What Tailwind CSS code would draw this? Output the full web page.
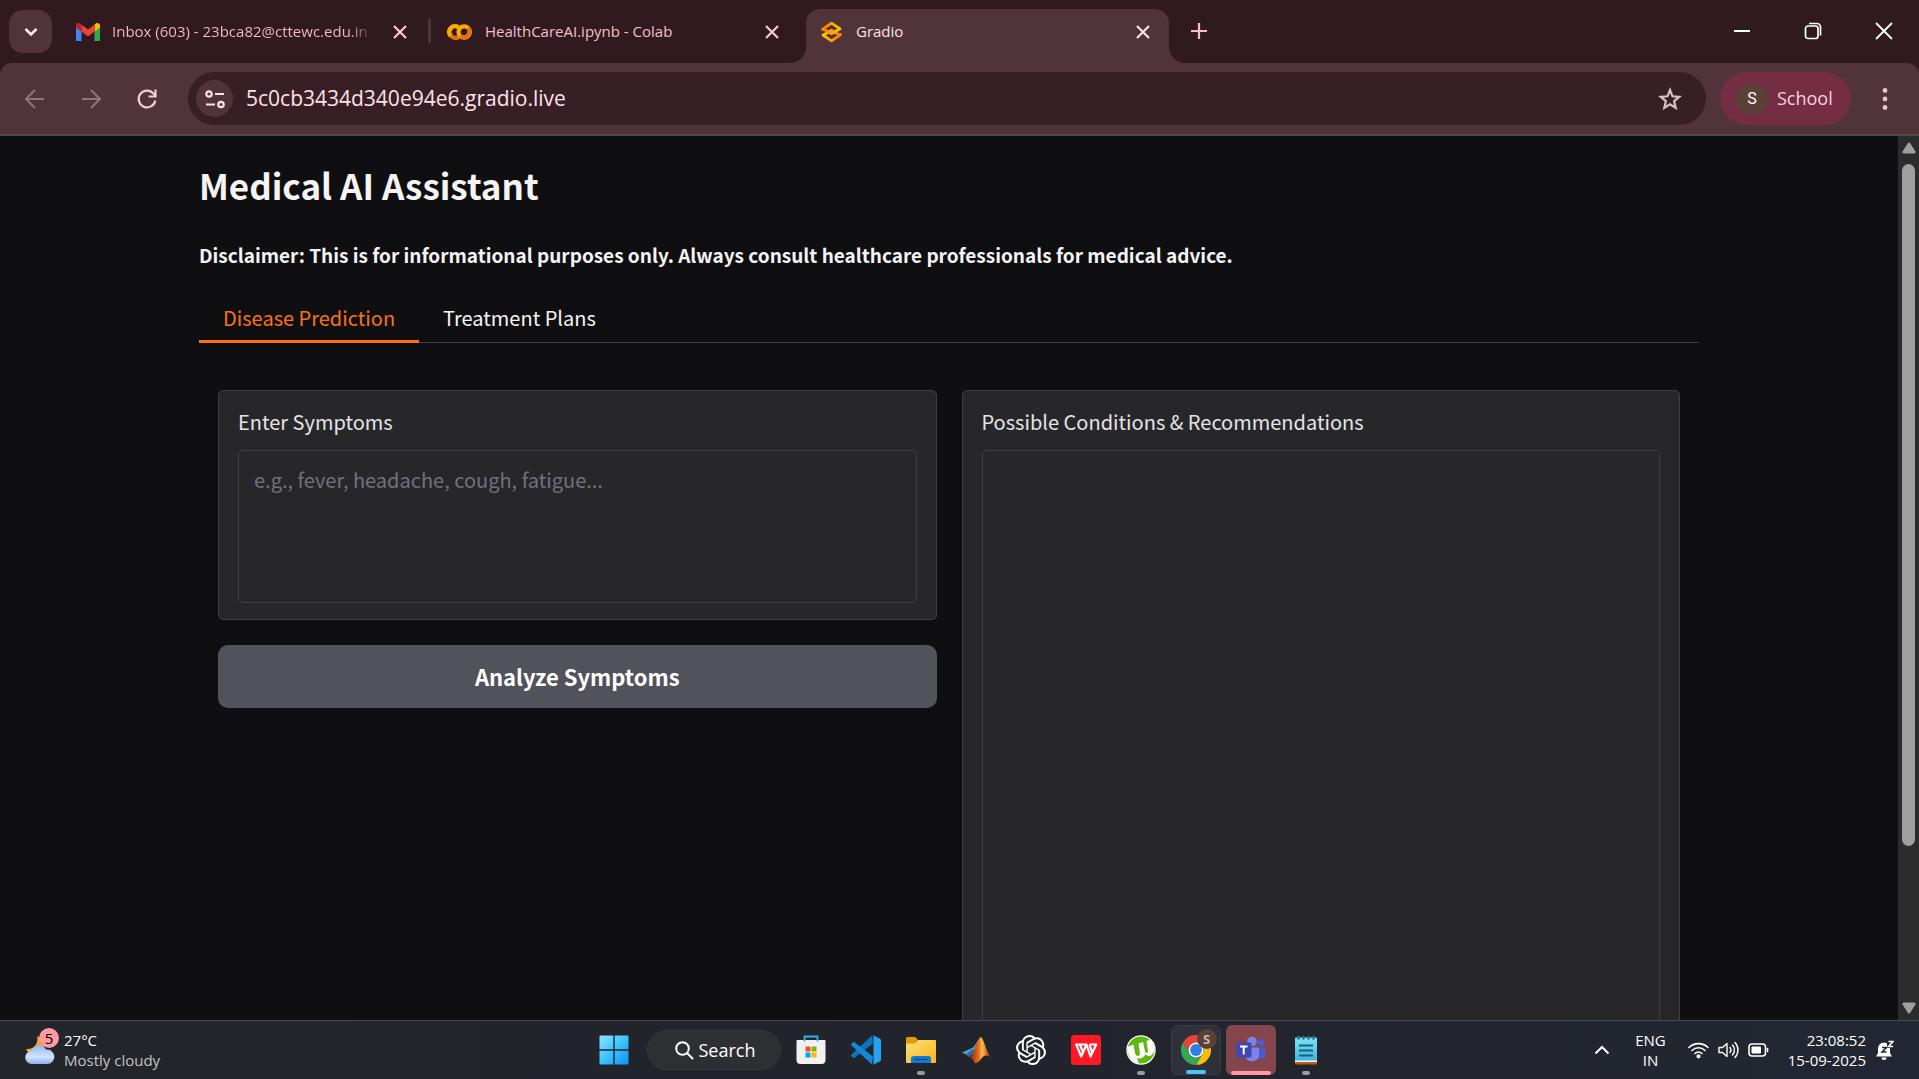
<!DOCTYPE html>
<html lang="en">
<head>
<meta charset="utf-8">
<title>Gradio</title>
<script src="https://cdn.jsdelivr.net/npm/@tailwindcss/browser@4"></script>
</head>
<body class="flex h-screen flex-col overflow-hidden bg-[#0f0f11] font-['Open_Sans','Noto_Sans',sans-serif] text-white">

<!-- Tab strip -->
<header class="shrink-0 bg-[#301a1f]">
  <div class="flex h-[63px] items-end">
    <button aria-label="Search tabs" class="mb-[10px] ml-[9px] flex h-[43px] w-[43px] items-center justify-center rounded-[14px] bg-[#50343a]">
      <svg class="size-4" viewBox="0 0 16 16" fill="none" stroke="#ffe8ec" stroke-width="2.6"><path d="M2.500 5 8 10.500 13.500 5"/></svg>
    </button>
    <div class="flex h-[63px] w-[376px] items-center pl-6">
      <svg class="h-[18px] w-6 shrink-0" viewBox="0 0 24 18"><path fill="#4285f4" d="M0 4v12.400C0 17.300.7 18 1.600 18H5.500V8z"/><path fill="#34a853" d="M18.500 18h3.900c.9 0 1.600-.7 1.600-1.600V4l-5.500 4z"/><path fill="#fbbc04" d="M18.500 1.600V8.500L24 4.400V2.500c0-2-2.300-3.200-4-2z"/><path fill="#ea4335" d="M5.500 8.500V1.600L12 6.500l6.500-4.900v6.900L12 13.400z"/><path fill="#c5221f" d="M0 2.500v1.900l5.500 4.100V1.600L4 .5C2.300-.7 0 .5 0 2.500z"/></svg>
      <span class="ml-3 w-[262px] overflow-hidden bg-linear-to-r from-[#f0c0ca] from-90% to-transparent bg-clip-text text-[15px] whitespace-nowrap text-transparent">Inbox (603) - 23bca82@cttewc.edu.in</span>
      <button aria-label="Close tab" class="ml-4 size-5 shrink-0"><svg class="size-5" viewBox="0 0 20 20" stroke="#f6ccd4" stroke-width="2.200"><path d="M4 4 16 16M16 4 4 16"/></svg></button>
    </div>
    <div class="mb-5 h-[25px] w-[3px] rounded-full bg-[#50343a]"></div>
    <div class="flex h-[63px] w-[375px] items-center pl-4">
      <svg class="h-4 w-[25px] shrink-0" viewBox="0 0 25 16" fill="none" stroke-width="4.200"><path stroke="#e8710a" d="M12.300 3.600A5.800 5.800 0 1 0 12 12.700"/><path stroke="#f9ab00" d="M3.600 12A5.800 5.800 0 0 1 11.800 3.800"/><circle stroke="#f9ab00" cx="17.200" cy="8" r="5.700"/><path stroke="#e8710a" d="M21.200 4A5.700 5.700 0 0 1 13.200 12"/></svg>
      <span class="ml-[13px] w-[262px] text-[15px] whitespace-nowrap text-[#f0c0ca]">HealthCareAI.ipynb - Colab</span>
      <button aria-label="Close tab" class="ml-[15px] size-5 shrink-0"><svg class="size-5" viewBox="0 0 20 20" stroke="#f6ccd4" stroke-width="2.200"><path d="M4 4 16 16M16 4 4 16"/></svg></button>
    </div>
    <div class="relative flex h-[54px] w-[363px] items-center rounded-t-[14px] bg-[#50343a] pb-[9px] pl-[15px]">
      <svg class="absolute bottom-0 -left-4 size-4" viewBox="0 0 16 16" fill="#50343a"><path d="M16 0v16H0A16 16 0 0 0 16 0z"/></svg>
      <svg class="absolute -right-4 bottom-0 size-4" viewBox="0 0 16 16" fill="#50343a"><path d="M0 0v16h16A16 16 0 0 1 0 0z"/></svg>
      <svg class="h-[22px] w-[21px] shrink-0" viewBox="0 0 21 22" fill="none" stroke-width="2.800" stroke-linejoin="round"><defs><linearGradient id="ga" x1="0" y1="0" x2="1" y2="0"><stop offset="0" stop-color="#ff7c00"/><stop offset="1" stop-color="#ffc800"/></linearGradient><linearGradient id="gb" x1="0" y1="0" x2="1" y2="0"><stop offset="0" stop-color="#ffc800"/><stop offset="1" stop-color="#ff7c00"/></linearGradient></defs><path stroke="url(#gb)" d="M10.500 9.200 19 14.200 10.500 19.800 2 14.200z"/><path stroke="url(#ga)" d="M10.500 2.200 19 7.800 10.500 12.800 2 7.800z"/><path stroke="#ff9a00" stroke-width="2" d="M1.500 7.800v2M19.500 12.200v2"/></svg>
      <span class="ml-[14px] w-[270px] text-[15px] text-[#ffe2e8]">Gradio</span>
      <button aria-label="Close tab" class="ml-[7px] size-5 shrink-0"><svg class="size-5" viewBox="0 0 20 20" stroke="#ffe2e8" stroke-width="2.200"><path d="M4 4 16 16M16 4 4 16"/></svg></button>
    </div>
    <button aria-label="New tab" class="mb-[22px] ml-5 size-5"><svg class="size-5" viewBox="0 0 20 20" stroke="#f0c0ca" stroke-width="2.200"><path d="M10 2v16M2 10h16"/></svg></button>
    <div class="mb-[23px] ml-auto flex gap-[53px] pr-[26px]">
      <button aria-label="Minimize" class="size-[18px]"><svg class="size-[18px]" viewBox="0 0 18 18" stroke="#fff" stroke-width="2"><path d="M1 9h16"/></svg></button>
      <button aria-label="Restore" class="size-[18px]"><svg class="size-[18px]" viewBox="0 0 18 18" fill="none" stroke="#fff" stroke-width="1.700"><rect x="1.500" y="4" width="12.500" height="12.500" rx="2.500"/><path d="M5 1.500h8a3.500 3.500 0 0 1 3.500 3.500v8.500"/></svg></button>
      <button aria-label="Close" class="size-[18px]"><svg class="size-[18px]" viewBox="0 0 18 18" stroke="#fff" stroke-width="1.800"><path d="M1 1 17 17M17 1 1 17"/></svg></button>
    </div>
  </div>

  <!-- Toolbar -->
  <div class="flex h-[73px] items-center rounded-t-xl border-b-2 border-[#534549] bg-[#50343a] pl-6">
    <button aria-label="Back" class="size-[22px]"><svg class="size-[22px]" viewBox="0 0 22 22" fill="none" stroke="#8f747b" stroke-width="2"><path d="M20 11H2.500M11 2 2 11l9 9"/></svg></button>
    <button aria-label="Forward" class="ml-[34px] size-[22px]"><svg class="size-[22px]" viewBox="0 0 22 22" fill="none" stroke="#8f747b" stroke-width="2"><path d="M2 11h17.500M11 2l9 9-9 9"/></svg></button>
    <button aria-label="Reload" class="ml-[34px] size-[22px]"><svg class="size-[22px]" viewBox="0 0 22 22" fill="none" stroke="#f6ccd4" stroke-width="2.200"><path d="M19.300 12.500A8.400 8.400 0 1 1 17.500 5.600L19.500 8M19.500 1.500V8.500H12.500"/></svg></button>
    <div class="ml-[30px] flex h-[53px] flex-1 items-center rounded-full bg-[#381f25] pr-6 pl-2">
      <button aria-label="View site information" class="flex size-[37px] items-center justify-center rounded-full bg-[#50343a]">
        <svg class="size-5" viewBox="0 0 20 20" fill="none" stroke="#ffe2e8" stroke-width="2.200"><circle cx="4" cy="5" r="2.700"/><path d="M10 5h9M1 15.500h9"/><circle cx="16" cy="15.500" r="2.700"/></svg>
      </button>
      <input aria-label="Address" value="5c0cb3434d340e94e6.gradio.live" class="ml-[13px] min-w-0 flex-1 bg-transparent text-[21px] text-[#ffe2e8] outline-none">
      <button aria-label="Bookmark this tab" class="size-6"><svg class="size-6" viewBox="0 0 24 24" fill="none" stroke="#d9c0c6" stroke-width="2.200" stroke-linejoin="miter"><path d="M12 3l2.500 6.300 6.700.5-5.100 4.400 1.600 6.600L12 17.200l-5.700 3.600 1.600-6.600-5.100-4.400 6.700-.5z"/></svg></button>
    </div>
    <button class="ml-[14px] flex h-[53px] w-[131px] items-center rounded-full bg-[#742d43] pl-4 text-[18px] text-[#ffd0dc]">
      <span class="mr-[9px] flex size-8 items-center justify-center rounded-full bg-[#5b4037] font-[Roboto,sans-serif] text-[16px] text-white">S</span>School
    </button>
    <button aria-label="Menu" class="mr-6 ml-[24px] h-6 w-5"><svg class="h-6 w-5" viewBox="0 0 20 24" fill="#f0c0ca"><circle cx="10" cy="3.500" r="2.400"/><circle cx="10" cy="12" r="2.400"/><circle cx="10" cy="20.500" r="2.400"/></svg></button>
  </div>
</header>

<!-- Page -->
<div class="flex min-h-0 flex-1 font-['Noto_Sans_CJK_SC',sans-serif]">
  <main class="min-w-0 flex-1 overflow-hidden">
    <div class="mx-auto max-w-[1500px] pt-[22px]">
      <h1 class="text-[35px] leading-[54px] font-bold text-[#f4f4f5]">Medical AI Assistant</h1>
      <p class="mt-7 text-[19px] leading-[30px] font-bold text-[#f4f4f5]">Disclaimer: This is for informational purposes only. Always consult healthcare professionals for medical advice.</p>
      <div role="tablist" class="mt-[22px] flex h-[51px] border-b border-[#3f3f46] text-[20px]">
        <button role="tab" aria-selected="true" class="-mb-px border-b-[3px] border-[#f97316] px-6 pt-1 text-[#f97316]">Disease Prediction</button>
        <button role="tab" aria-selected="false" class="px-6 pt-1 pb-[2px] text-[#f4f4f5]">Treatment Plans</button>
      </div>
      <div class="mt-[47px] grid grid-cols-2 gap-[25px] px-[19px]">
        <div>
          <div class="rounded-[5px] border border-[#3f3f46] bg-[#27272a] px-[19px] pt-[16px] pb-4">
            <label for="symptoms" class="block text-[20px] leading-[30px] text-[#e4e4e7]">Enter Symptoms</label>
            <textarea id="symptoms" placeholder="e.g., fever, headache, cough, fatigue..." class="mt-[13px] block h-[153px] w-full resize-none rounded-[5px] border border-[#3f3f46] bg-[#27272a] px-[15px] py-[14px] text-[20px] leading-[30px] text-[#f4f4f5] placeholder:text-[#71717a]"></textarea>
          </div>
          <button class="mt-[25px] h-[63px] w-full rounded-[10px] bg-[#52525b] text-[22px] font-bold text-white">Analyze Symptoms</button>
        </div>
        <div class="rounded-[5px] border border-[#3f3f46] bg-[#27272a] px-[19px] pt-[16px] pb-4">
          <label for="result" class="block text-[20px] leading-[30px] text-[#e4e4e7]">Possible Conditions &amp; Recommendations</label>
          <textarea id="result" readonly class="mt-[13px] block h-[640px] w-full resize-none rounded-[5px] border border-[#3f3f46] bg-[#27272a] px-[15px] py-[14px] text-[20px]"></textarea>
        </div>
      </div>
    </div>
  </main>
  <div class="flex w-[21px] shrink-0 flex-col items-center bg-[#2c2c2c] py-[6px]">
    <svg class="h-3 w-[14px]" viewBox="0 0 14 12" fill="#9f9f9f"><path d="M6 1 .5 9.500Q0 11.500 2 11.500H12Q14 11.500 13.500 9.500L8 1Q7 0 6 1z"/></svg>
    <div class="mt-[10px] h-[682px] w-[13px] rounded-full bg-[#9f9f9f]"></div>
    <svg class="mt-auto h-3 w-[14px]" viewBox="0 0 14 12" fill="#9f9f9f"><path d="M6 11 .5 2.500Q0 .5 2 .5H12Q14 .5 13.500 2.500L8 11Q7 12 6 11z"/></svg>
  </div>
</div>

<!-- Taskbar -->
<footer class="grid h-[59px] shrink-0 grid-cols-[1fr_auto_1fr] items-center border-t border-[#4a4a4e] bg-linear-to-r from-[#222529] via-[#21242b] via-50% to-[#232733]">
  <button class="relative flex items-center pl-[25px] text-left">
    <svg class="h-[30px] w-[30px]" viewBox="0 0 30 30"><defs><linearGradient id="cl" x1="0" y1="0" x2="0" y2="1"><stop offset="0" stop-color="#8fb8f5"/><stop offset=".6" stop-color="#d4e2fb"/><stop offset="1" stop-color="#8db0f0"/></linearGradient></defs><path fill="#f6a623" d="M12 1C14 8 9 15 1 14c2 5 9 7 14 3s6-12-3-16z"/><path fill="url(#cl)" d="M7 29a6.500 6.500 0 0 1-.5-13A8 8 0 0 1 21 14.500 7.200 7.200 0 0 1 23 29z"/></svg>
    <span class="absolute -top-[2px] left-[39px] flex size-5 items-center justify-center rounded-full bg-[#ff99a4] text-[15px] leading-none text-black">5</span>
    <span class="ml-[9px] text-[15px] leading-5"><span class="block">27°C</span><span class="block text-[#c4c4c6]">Mostly cloudy</span></span>
  </button>

  <nav aria-label="Taskbar" class="flex items-center gap-[5px]">
    <button aria-label="Start" class="mr-[3px] flex size-[50px] items-center justify-center"><svg class="size-[30px]" viewBox="0 0 30 30"><defs><linearGradient id="wn" x1="0" y1="0" x2="1" y2="1"><stop offset="0" stop-color="#8be4ff"/><stop offset=".5" stop-color="#3cc4fd"/><stop offset="1" stop-color="#0a93f5"/></linearGradient></defs><path fill="url(#wn)" d="M1.500.5H14.300V14.300H.5V1.500a1 1 0 0 1 1-1zM15.700.5h12.800a1 1 0 0 1 1 1v12.800H15.700zM.5 15.700h13.800v13.800H1.500a1 1 0 0 1-1-1zM15.700 15.700h13.800v12.800a1 1 0 0 1-1 1H15.700z"/></svg></button>
    <button class="flex h-10 w-[134px] items-center rounded-full border border-[#34363b] bg-[#2d2f33] pl-[27px] text-[18px] text-white"><svg class="mr-[5px] size-[19px]" viewBox="0 0 19 19" fill="none" stroke="#fff" stroke-width="2"><circle cx="7.500" cy="7.500" r="6.300"/><path d="m12 12 6 6"/></svg>Search</button>
    <button aria-label="Microsoft Store" class="flex size-[50px] items-center justify-center"><svg class="size-[30px]" viewBox="0 0 30 30"><path fill="#f1f1f1" d="M1.500 5h27a1 1 0 0 1 1 1v19a4 4 0 0 1-4 4h-21a4 4 0 0 1-4-4V6a1 1 0 0 1 1-1z"/><path d="M8.500 6.500V1.500h13v5" fill="none" stroke="#27b5ec" stroke-width="1.800"/><path fill="#f25022" d="M9.500 11.500h5v5h-5z"/><path fill="#7fba00" d="M15.500 11.500h5v5h-5z"/><path fill="#00a4ef" d="M9.500 17.500h5v5h-5z"/><path fill="#ffb900" d="M15.500 17.500h5v5h-5z"/></svg></button>
    <button aria-label="Visual Studio Code" class="flex size-[50px] items-center justify-center"><svg class="size-[30px]" viewBox="0 0 30 30"><path fill="#0a74bf" d="M22 8.500 3.500 22.800a1.300 1.300 0 0 1-1.600-.1L.5 21.300a1.200 1.200 0 0 1 0-1.900L21 .4z"/><path fill="#1288d6" d="M22 21.500 3.500 7.200a1.300 1.300 0 0 0-1.600.1L.5 8.700a1.200 1.200 0 0 0 0 1.900L21 29.600z"/><path fill="#25a2f0" d="M21 29.700a2 2 0 0 0 1.600-.1l6.200-3A2 2 0 0 0 30 24.900V5.100a2 2 0 0 0-1.200-1.700l-6.200-3A2 2 0 0 0 20.500.7c.7-.6 2-.1 2 .8v27c0 1-1.300 1.500-1.500 1.200z"/></svg></button>
    <button aria-label="File Explorer" class="relative flex size-[50px] items-center justify-center"><svg class="size-[30px]" viewBox="0 0 30 30"><defs><linearGradient id="fe" x1="0" y1="0" x2="1" y2="1"><stop offset="0" stop-color="#ffe07a"/><stop offset="1" stop-color="#f9b51a"/></linearGradient></defs><path fill="#e09a06" d="M0 3.500A1.500 1.500 0 0 1 1.500 2h8L12 5h16v6H0z"/><path fill="url(#fe)" d="M0 8.500h9L12.500 5H29a1 1 0 0 1 1 1v21a1 1 0 0 1-1 1H1a1 1 0 0 1-1-1z"/><path fill="#1679d0" d="M5 28v-4.500A2.500 2.500 0 0 1 7.500 21h15a2.500 2.500 0 0 1 2.500 2.500V28z"/><path stroke="#0b4e94" stroke-width="1.200" d="M8.500 24.500h13"/></svg><span class="absolute bottom-0 h-1 w-2 rounded-full bg-[#9a9b9e]"></span></button>
    <button aria-label="MATLAB" class="flex size-[50px] items-center justify-center"><svg class="size-[30px]" viewBox="0 0 30 30"><defs><linearGradient id="ml" x1="0" y1="0" x2="1" y2="0"><stop offset="0" stop-color="#7c1f18"/><stop offset=".45" stop-color="#e8731a"/><stop offset=".6" stop-color="#f9c04a"/><stop offset="1" stop-color="#b3260f"/></linearGradient></defs><path fill="#4f9fd0" d="M1 17.500 10 13.500c3-1 5-5 8-10L13 17 8 21z"/><path fill="#2b6a9e" d="M5 19.500 12 14l2 3-6 5z"/><path fill="url(#ml)" d="M20 2c3 2 5 14 9.500 20.500C26 19.500 23 20 20 24c-2 2.500-4 4-6 4.500-1-3-3-5-5.500-6.500C13 20.500 16 3 20 2z"/></svg></button>
    <button aria-label="ChatGPT" class="flex size-[50px] items-center justify-center"><svg class="size-[30px]" viewBox="0 0 24 24" fill="#fff"><path d="M22.282 9.821a5.985 5.985 0 0 0-.516-4.910 6.046 6.046 0 0 0-6.510-2.900A6.065 6.065 0 0 0 4.981 4.182a5.985 5.985 0 0 0-3.998 2.900 6.046 6.046 0 0 0 .743 7.097 5.980 5.980 0 0 0 .510 4.911 6.051 6.051 0 0 0 6.515 2.900A5.985 5.985 0 0 0 13.260 24a6.056 6.056 0 0 0 5.772-4.206 5.990 5.990 0 0 0 3.997-2.900 6.056 6.056 0 0 0-.747-7.073zM13.260 22.430a4.476 4.476 0 0 1-2.876-1.040l.141-.081 4.779-2.758a.795.795 0 0 0 .392-.681v-6.737l2.020 1.168a.071.071 0 0 1 .038.052v5.583a4.504 4.504 0 0 1-4.494 4.494zM3.600 18.304a4.470 4.470 0 0 1-.535-3.014l.142.085 4.783 2.759a.771.771 0 0 0 .780 0l5.843-3.369v2.332a.080.080 0 0 1-.033.062L9.740 19.950a4.500 4.500 0 0 1-6.140-1.646zM2.340 7.896a4.485 4.485 0 0 1 2.366-1.973V11.600a.766.766 0 0 0 .388.676l5.815 3.355-2.020 1.168a.076.076 0 0 1-.071 0l-4.830-2.786A4.504 4.504 0 0 1 2.340 7.872zm16.597 3.855-5.833-3.387L15.119 7.200a.076.076 0 0 1 .071 0l4.830 2.791a4.494 4.494 0 0 1-.676 8.105v-5.678a.790.790 0 0 0-.407-.667zm2.010-3.023-.141-.085-4.774-2.782a.776.776 0 0 0-.785 0L9.409 9.230V6.897a.066.066 0 0 1 .028-.061l4.830-2.787a4.500 4.500 0 0 1 6.680 4.660zM8.307 12.863l-2.020-1.164a.080.080 0 0 1-.038-.057V6.075a4.500 4.500 0 0 1 7.375-3.453l-.142.080L8.704 5.460a.795.795 0 0 0-.393.681zm1.097-2.365 2.602-1.500 2.607 1.500v2.999l-2.597 1.500-2.607-1.500z"/></svg></button>
    <button aria-label="WPS Office" class="flex size-[50px] items-center justify-center"><svg class="size-[30px]" viewBox="0 0 30 30" fill="none" stroke="#fff" stroke-width="2.200" stroke-linejoin="round"><rect width="30" height="30" rx="3.500" fill="#ff1826" stroke="none"/><path d="M15.500 9.500H5.200L10.200 21.500 15.500 9.500 19.500 21.500 25.200 9.500H18.500M8.800 9.500 12 17M18.500 9.500 21 17"/></svg></button>
    <button aria-label="µTorrent" class="relative flex size-[50px] items-center justify-center"><svg class="size-[30px]" viewBox="0 0 30 30"><circle cx="15" cy="15" r="14.700" fill="#fff"/><circle cx="15" cy="15" r="13.500" fill="#5fb80f"/><path fill="#fff" d="M1 12 7.500 9.500 9 18c.5 3 3.500 4 5 1.500L12.500 8.500 17 7l2 9.500c.5 2 3 2 3-.5L20.500 6 25 4.500l3 7 .500 5-3.500 4c-2 1-4.500.5-5.500-1.500-1.500 4-5.500 5.500-8.500 3.500l2 6.500C7 28 2 22 1 12z"/></svg><span class="absolute bottom-0 h-1 w-2 rounded-full bg-[#9a9b9e]"></span></button>
    <button aria-label="Google Chrome" class="relative flex size-[50px] items-center justify-center rounded-md border border-[#383b42] bg-[#2e3139]"><svg class="size-[30px]" viewBox="0 0 30 30"><path fill="#ea4335" d="M2 7.500A15 15 0 0 1 28 7.500H15a7.500 7.500 0 0 0-6.500 3.750L7.500 17z"/><path fill="#fbbc04" d="M28 7.500A15 15 0 0 1 15 30l6.500-11.250A7.500 7.500 0 0 0 21.500 11.250L15 7.500z"/><path fill="#34a853" d="M2 7.500A15 15 0 0 0 15 30l6.500-11.250a7.500 7.500 0 0 1-13 0z"/><circle cx="15" cy="15" r="7.500" fill="#fff"/><circle cx="15" cy="15" r="5.900" fill="#2b7de9"/></svg><span class="absolute top-[3px] right-[3px] flex size-5 items-center justify-center rounded-full bg-[#5b4037] text-[13px] leading-none font-bold text-[#c5b8b4]">S</span><span class="absolute bottom-0 h-1 w-5 rounded-full bg-[#4cc2ff]"></span></button>
    <button aria-label="Microsoft Teams" class="relative flex size-[50px] items-center justify-center rounded-md bg-[#84454d]"><svg class="size-[30px]" viewBox="0 0 30 30"><circle cx="16" cy="6.500" r="4.800" fill="#7b83eb"/><circle cx="25" cy="7.500" r="3.400" fill="#5059c9"/><path fill="#5059c9" d="M20 12.500h9.500V20a5 5 0 0 1-9.500 1.500z"/><path fill="#7b83eb" d="M9 12.500h14V21a7.300 7.300 0 0 1-14 0z"/><rect y="7.500" width="15.500" height="15" rx="1.500" fill="#3f47b0"/><path stroke="#fff" stroke-width="2" d="M4 11.500h7.500M7.700 11.500V19.500"/></svg><span class="absolute bottom-0 h-1 w-10 rounded-full bg-[#ff99a4]"></span></button>
    <button aria-label="Notepad" class="relative flex size-[50px] items-center justify-center"><svg class="size-[30px]" viewBox="0 0 30 30"><defs><linearGradient id="np" x1="0" y1="0" x2="0" y2="1"><stop offset="0" stop-color="#7fe2f5"/><stop offset="1" stop-color="#43b4dc"/></linearGradient></defs><path fill="#b8600f" d="M4 26h22v2.500a1 1 0 0 1-1 1H5a1 1 0 0 1-1-1z"/><path fill="#f3f3f3" d="M4 24h22v3H4z"/><path fill="url(#np)" d="M4 3.500a1 1 0 0 1 1-1h20a1 1 0 0 1 1 1V25.500H4z"/><path stroke="#11627e" stroke-width="1.800" d="M8 10.500h14M8 15.500h14M8 20.500h14"/><path stroke="#1b7795" stroke-width="2.600" stroke-linecap="round" d="M7.500 2v1.500M12.500 2v1.500M17.500 2v1.500M22.500 2v1.500"/></svg><span class="absolute bottom-0 h-1 w-2 rounded-full bg-[#9a9b9e]"></span></button>
  </nav>

  <div class="flex items-center justify-end pr-[25px] text-[15px] leading-5">
    <button aria-label="Show hidden icons"><svg class="h-[10px] w-4" viewBox="0 0 16 10" fill="none" stroke="#fff" stroke-width="2"><path d="m1.500 8.500 6.500-6.500 6.500 6.500"/></svg></button>
    <button class="ml-[25px] text-center">ENG<br>IN</button>
    <button aria-label="Network, volume and battery" class="ml-[22px] flex items-center gap-[9px]">
      <svg class="h-[18px] w-[21px]" viewBox="0 0 21 18" fill="none" stroke="#fff" stroke-width="1.600" stroke-linecap="round"><path d="M1 6.500a13.500 13.500 0 0 1 19 0M4 9.500a9.200 9.200 0 0 1 13 0M7 12.500a5 5 0 0 1 7 0"/><circle cx="10.500" cy="15.300" r="1.300" fill="#fff"/></svg>
      <svg class="h-[18px] w-[21px]" viewBox="0 0 21 18" fill="none" stroke="#fff" stroke-width="1.400" stroke-linecap="round" stroke-linejoin="round"><path d="M1 6.500h3.500L9 2.500v13l-4.500-4H1zM12 6.500a4 4 0 0 1 0 5M14.500 4a7.500 7.500 0 0 1 0 10M17 1.500a11 11 0 0 1 0 15"/></svg>
      <svg class="h-[18px] w-[21px]" viewBox="0 0 21 18" fill="none" stroke="#fff" stroke-width="1.600"><rect x="1" y="3" width="16.500" height="12" rx="3"/><rect x="3.500" y="5.500" width="9.500" height="7" rx="1" fill="#fff" stroke="none"/><path d="M19.500 7.500v3" stroke-linecap="round"/></svg>
    </button>
    <button class="ml-[19px] text-right">23:08:52<br>15-09-2025</button>
    <button aria-label="Notifications" class="ml-[10px]"><svg class="h-5 w-[18px]" viewBox="0 0 18 20" fill="#fff"><path d="M8 2.500a6 6 0 0 1 6 6V13l2 3.500H0L2 13V8.500a6 6 0 0 1 6-6zM5.500 17.500h5a2.500 2.500 0 0 1-5 0z"/><path d="M6 7.500h4.500L6 12h4.500" fill="none" stroke="#232733" stroke-width="1.500"/><path d="M11 0h7v8h-7z" fill="#232733"/><path d="M12.500 1.500H17L12.500 6.500H17" fill="none" stroke="#fff" stroke-width="1.500"/></svg></button>
  </div>
</footer>
</body>
</html>
